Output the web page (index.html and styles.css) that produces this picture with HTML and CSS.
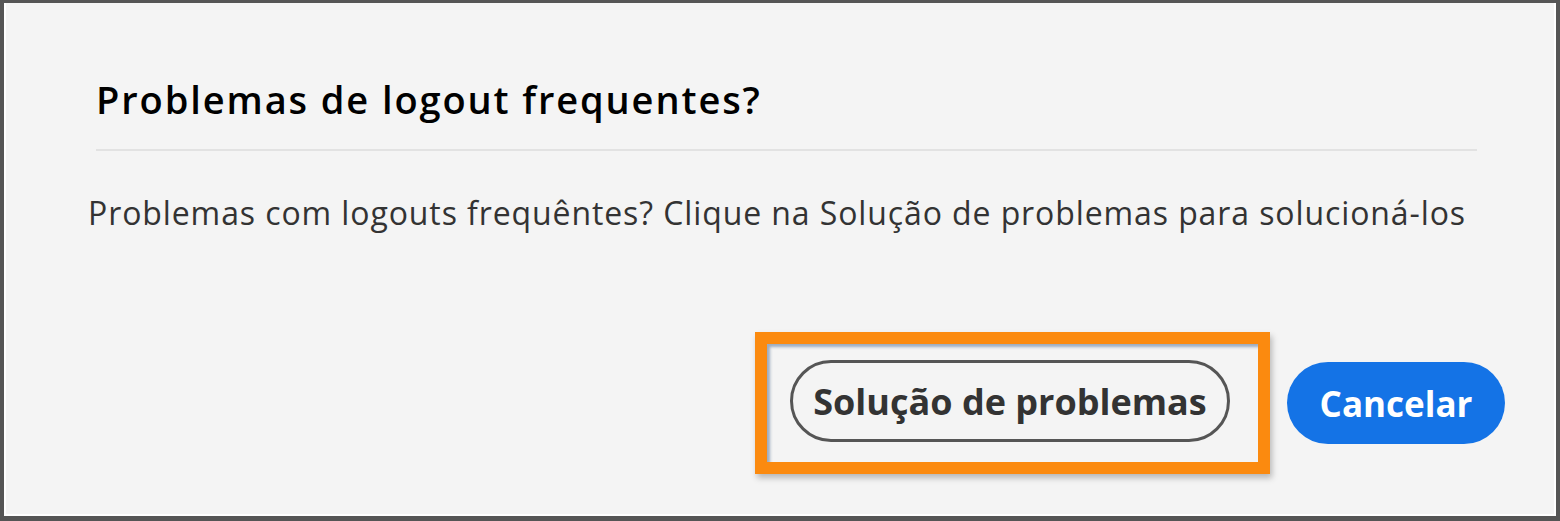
FILE: index.html
```html
<!DOCTYPE html>
<html lang="pt">
<head>
    <meta charset="UTF-8">
    <meta name="viewport" content="width=device-width, initial-scale=1.0">
    <title>Problemas de logout</title>
    <link rel="stylesheet" href="styles.css">
</head>
<body>
    <div class="dialog">
        <div class="dialog-header">
            <h2>Problemas de logout frequentes?</h2>
        </div>
        <p class="dialog-text">Problemas com logouts frequêntes? Clique na Solução de problemas para solucioná-los</p>
        <div class="dialog-actions">
            <div class="highlight">
                <button class="outline-btn">Solução de problemas</button>
            </div>
            <button class="cancel-btn">Cancelar</button>
        </div>
    </div>
</body>
</html>
```

FILE: styles.css
```css
* {
    margin: 0;
    padding: 0;
    box-sizing: border-box;
}
body {
    font-family: "Open Sans", "Noto Sans", sans-serif;
    background-color: #f4f4f4;
}
.dialog {
    height: 521px;
    background-color: #f4f4f4;
    border: 4px solid #555;
    border-top-width: 3px;
    border-bottom-width: 5px;
    box-shadow: inset 2px 0 0 #fff, inset -2px -2px 0 #fff;
    display: flex;
    flex-direction: column;
}
.dialog-header {
    margin: 0 79px 0 92px;
    padding-top: 71px;
    border-bottom: 2px solid #e2e2e2;
    padding-bottom: 25px;
}
.dialog-header h2 {
    font-size: 38px;
    font-weight: 600;
    color: #000;
    line-height: 50px;
    letter-spacing: 1.9px;
}
.dialog-text {
    margin: 42px 0 0 84px;
    font-size: 32px;
    color: #333;
    line-height: 40px;
    letter-spacing: 0.9px;
}
.dialog-actions {
    display: flex;
    justify-content: flex-end;
    align-items: center;
    gap: 17px;
    padding-right: 51px;
    margin-top: 99px;
}
.highlight {
    border: 12px solid #fb8a0f;
    padding: 16px 28px 20px 23px;
    box-shadow: 2px 4px 6px rgba(0, 0, 0, 0.25), inset 3px 3px 3px rgba(70, 100, 140, 0.5);
}
.outline-btn, .cancel-btn {
    font-family: inherit;
    font-size: 36px;
    font-weight: 700;
    height: 82px;
    border-radius: 41px;
    cursor: pointer;
}
.outline-btn {
    width: 440px;
    background-color: #f4f4f4;
    color: #333;
    border: 3px solid #555;
}
.cancel-btn {
    width: 218px;
    font-size: 35px;
    background-color: #1473e6;
    color: white;
    border: none;
}
```
